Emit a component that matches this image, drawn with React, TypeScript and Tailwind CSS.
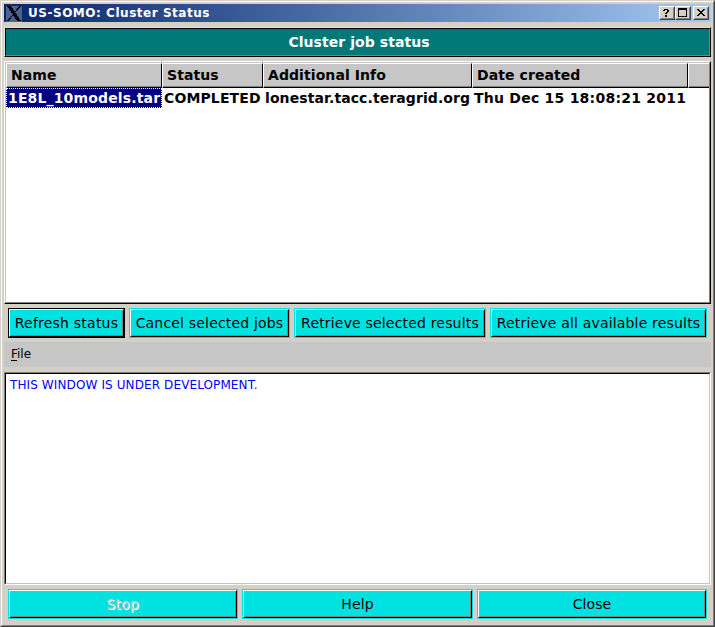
import type { ReactNode } from 'react';

function PushButton({ children, width, isDefault = false, disabled = false, tracking = 'tracking-[0.18px]' }: {
  children: ReactNode; width: string; isDefault?: boolean; disabled?: boolean; tracking?: string;
}) {
  return (
    <button
      disabled={disabled}
      className={`h-[30px] shrink-0 border ${width} ${isDefault ? 'border-black' : 'border-[#00e1e1]'}`}
    >
      <span className="block h-full border border-t-white border-l-white border-r-black border-b-black">
        <span className="flex h-full items-center justify-center border border-t-[#00e1e1] border-l-[#00e1e1] border-r-[#808080] border-b-[#808080] bg-[#00e1e1]">
          <span className={`whitespace-nowrap text-[14px] leading-[16px] ${tracking} ${disabled ? 'mr-px text-[#c6c6c6] [text-shadow:1px_1px_0_#ffffff]' : 'text-black'}`}>
            {children}
          </span>
        </span>
      </span>
    </button>
  );
}

function TitleButton({ d }: { d: string }) {
  return (
    <button className="h-[14px] w-4 shrink-0 border border-t-white border-l-white border-r-[#404040] border-b-[#404040] bg-[#d4d0c8]">
      <span className="block h-full border border-t-[#d4d0c8] border-l-[#d4d0c8] border-r-[#808080] border-b-[#808080]">
        <svg width="12" height="10" viewBox="0 0 12 10" className="block" shapeRendering="crispEdges">
          <path fillRule="evenodd" d={d} />
        </svg>
      </span>
    </button>
  );
}

function HeaderCell({ children, width }: { children?: ReactNode; width: string }) {
  return (
    <div className={`h-[25px] shrink-0 border border-t-white border-l-white border-r-black border-b-black ${width}`}>
      <div className="flex h-full items-center border-b border-[#808080] bg-[#c6c6c6] pl-1 tracking-[0.08px] whitespace-nowrap">{children}</div>
    </div>
  );
}

export default function App() {
  return (
    <div className="h-[627px] w-[715px] overflow-hidden border border-t-[#d4d0c8] border-l-[#d4d0c8] border-r-[#404040] border-b-[#404040] font-['DejaVu_Sans',sans-serif]">
      <div className="flex h-full flex-col border border-t-white border-l-white border-r-[#808080] border-b-[#808080] bg-[#d4d0c8] pt-[2px] pr-[2px] pl-[2px]">
        <header className="flex h-[18px] shrink-0 items-center bg-gradient-to-r from-[#0a246a] to-[#a6caf0] pr-[2px] pl-[2px]">
          <svg width="16" height="16" viewBox="0 0 16 16" className="self-end" shapeRendering="crispEdges">
            <path d="M0 0h16v16H0z" fill="#4a6296" />
            <path d="M1 0h4l10 15h-4zM13 0h2L9 7H8zM6 9h1L3 15H0z" fill="#000000" />
          </svg>
          <h1 className="ml-[6px] grow text-[12px] leading-[16px] font-bold tracking-[0.53px] text-white">US-SOMO: Cluster Status</h1>
          <TitleButton d="M3 1h4v1H3zM2 2h2v1H2zM6 2h2v2H6zM5 4h2v1H5zM4 5h2v1H4zM4 7h2v2H4z" />
          <TitleButton d="M1 0h9v9H1zM2 2v6h7V2z" />
          <div className="w-[2px]" />
          <TitleButton d="M2 1h2v1H2zM8 1h2v1H8zM3 2h2v1H3zM7 2h2v1H7zM4 3h4v1H4zM5 4h2v1H5zM4 5h4v1H4zM3 6h2v1H3zM7 6h2v1H7zM2 7h2v1H2zM8 7h2v1H8z" />
        </header>

        <div className="mt-[5px] h-[30px] shrink-0 border border-t-[#e6e3dc] border-l-[#e6e3dc] border-r-black border-b-black">
          <div className="flex h-full items-center justify-center border border-t-black border-l-black border-r-[#808080] border-b-[#808080] bg-[#007878] text-[14px] font-bold text-white">
            <span className="ml-[3px] tracking-[0.06px]">Cluster job status</span>
          </div>
        </div>

        <main className="mt-1 h-[243px] shrink-0 border border-t-white border-l-white border-r-black border-b-black">
          <div className="h-full overflow-hidden border border-t-[#c6c6c6] border-l-[#c6c6c6] border-r-[#808080] border-b-[#808080] bg-white text-[14px] font-bold">
            <div className="flex bg-[#c6c6c6]">
              <HeaderCell width="w-[156px]">Name</HeaderCell>
              <HeaderCell width="w-[101px]">Status</HeaderCell>
              <HeaderCell width="w-[209px]">Additional Info</HeaderCell>
              <HeaderCell width="w-[216px]">Date created</HeaderCell>
              <HeaderCell width="w-[22px]" />
            </div>
            <div className="flex h-5 whitespace-nowrap leading-[18px]">
              <div className="w-[156px] overflow-hidden border border-dotted border-white bg-[#000080] pl-px tracking-[0.15px] text-white">1E8L_10models.tar</div>
              <div className="w-[101px] pt-px pl-[2px] tracking-[0.12px]">COMPLETED</div>
              <div className="w-[209px] pt-px pl-[2px] tracking-[0.09px]">lonestar.tacc.teragrid.org</div>
              <div className="w-[216px] pt-px pl-[2px] tracking-[0.24px]">Thu Dec 15 18:08:21 2011</div>
            </div>
          </div>
        </main>

        <div className="mt-1 flex shrink-0 gap-1 pl-1">
          <PushButton width="w-[117px]" isDefault tracking="tracking-[0.22px]">Refresh status</PushButton>
          <PushButton width="w-[161px]">Cancel selected jobs</PushButton>
          <PushButton width="w-[192px]">Retrieve selected results</PushButton>
          <PushButton width="w-[217px]">Retrieve all available results</PushButton>
        </div>

        <nav className="mt-1 flex h-[25px] shrink-0 items-center bg-[#c6c6c6] pb-[2px] pl-[7px] text-[12px]">
          <span><span className="underline underline-offset-2">F</span>ile</span>
        </nav>

        <div className="mt-[5px] h-[213px] shrink-0 border border-t-[#808080] border-l-[#808080] border-r-white border-b-white">
          <div className="h-full border border-t-black border-l-black border-r-[#c6c6c6] border-b-[#c6c6c6] bg-white pt-[3px] pl-1 text-[12px] leading-[16px] tracking-[0.11px] text-[#0000ff]">
            THIS WINDOW IS UNDER DEVELOPMENT.
          </div>
        </div>

        <footer className="mt-1 flex shrink-0 gap-1 pl-1">
          <PushButton width="w-[230px]" disabled>Stop</PushButton>
          <PushButton width="w-[231px]">Help</PushButton>
          <PushButton width="w-[230px]" tracking="tracking-[0.1px]">Close</PushButton>
        </footer>
      </div>
    </div>
  );
}
